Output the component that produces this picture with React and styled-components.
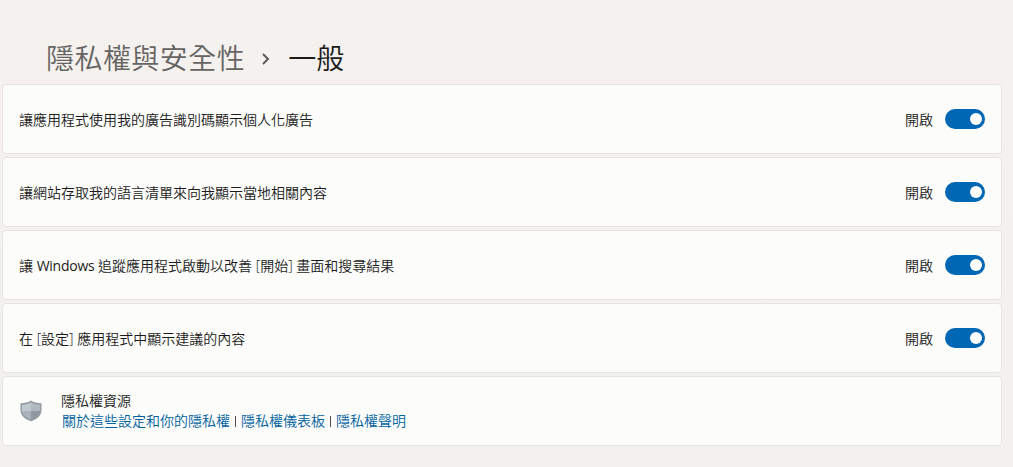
import React, { useState } from 'react';
import styled, { createGlobalStyle } from 'styled-components';

const GlobalStyle = createGlobalStyle`
  * {
    box-sizing: border-box;
  }

  body {
    margin: 0;
    background: #f4f1ee;
    color: #1b1b1b;
    font-family: "Open Sans", "Noto Sans CJK TC", sans-serif;
    font-size: 14px;
    font-weight: 350;
    line-height: 20px;
  }
`;

const Page = styled.main`
  min-height: 467px;
  padding: 38px 11px 21px 2px;
  background: linear-gradient(to bottom, #f5f1ee, #f2f1ee);
`;

const Breadcrumb = styled.h1`
  display: flex;
  align-items: center;
  height: 40px;
  margin: 0 0 6px;
  padding-left: 44px;
  font-size: 28px;
  font-weight: 350;
  line-height: 40px;
  white-space: nowrap;
`;

const Parent = styled.span`
  color: #666462;
  letter-spacing: 0.45px;
`;

const Current = styled.span`
  color: #1b1b1b;
`;

const Chevron = styled.svg`
  width: 10px;
  height: 12px;
  margin: 2px 17px 0 16px;
  fill: none;
  stroke: #5f5d5b;
  stroke-width: 2;
`;

const CardList = styled.div`
  display: grid;
  gap: 3px;
`;

const Card = styled.section`
  display: flex;
  align-items: center;
  height: 70px;
  padding: 0 16px;
  background: #fcfcfa;
  border: 1px solid #e7e4e1;
  border-radius: 4px;
`;

const Label = styled.span`
  flex: 1;
  padding-top: 2px;
  white-space: nowrap;
`;

// Latin words look too thin at the weight used for the Chinese text
const Latin = styled.span`
  font-weight: 400;
  letter-spacing: -0.25px;
`;

const Status = styled.span`
  margin-right: 12px;
  padding-top: 2px;
`;

const Toggle = styled.button`
  display: flex;
  align-items: center;
  justify-content: ${props => (props.$on ? 'flex-end' : 'flex-start')};
  width: 40px;
  height: 20px;
  padding: 0 3px;
  background: ${props => (props.$on ? '#0067b5' : '#8a8886')};
  border: 0;
  border-radius: 10px;
`;

const Knob = styled.span`
  width: 12px;
  height: 12px;
  background: #fff;
  border-radius: 50%;
`;

const ShieldIcon = styled.svg`
  width: 24px;
  height: 24px;
  margin-right: 18px;
`;

const Links = styled.div`
  display: flex;
  align-items: center;
  padding-left: 1px;
  white-space: nowrap;
`;

const ResourceLink = styled.a`
  color: #00619f;
  text-decoration: none;
`;

const Divider = styled.span`
  width: 1px;
  height: 11px;
  margin: 0 5px;
  background: #5c4a45;
`;

const settings = [
  { id: 'ads', label: '讓應用程式使用我的廣告識別碼顯示個人化廣告' },
  { id: 'language', label: '讓網站存取我的語言清單來向我顯示當地相關內容' },
  {
    id: 'tracking',
    label: (
      <>
        讓 <Latin>Windows</Latin> 追蹤應用程式啟動以改善 [開始] 畫面和搜尋結果
      </>
    ),
  },
  { id: 'suggestions', label: '在 [設定] 應用程式中顯示建議的內容' },
];

const links = ['關於這些設定和你的隱私權', '隱私權儀表板', '隱私權聲明'];

function Shield() {
  return (
    <ShieldIcon viewBox="0 0 24 24" aria-hidden="true">
      <path
        d="M12 1.6C9.4 3.4 5 4.4 1.5 4.3V11c0 6 5 9.6 10.5 11.2C17.5 20.6 22.5 17 22.5 11V4.3C19 4.4 14.6 3.4 12 1.6Z"
        fill="#929aa1"
      />
      <path d="M12 3.2C9.3 4.9 6.2 5.7 2.9 5.7V12H12Z" fill="#c0c8cf" />
      <path d="M12 3.2C14.7 4.9 17.8 5.7 21.1 5.7V12H12Z" fill="#b0b8c0" />
      <path d="M2.9 12H12v8.8C7 18.6 3.3 16 2.9 12Z" fill="#aab2bb" />
      <path d="M21.1 12H12v8.8C17 18.6 20.7 16 21.1 12Z" fill="#8f97a1" />
    </ShieldIcon>
  );
}

function SettingCard({ id, label }) {
  const [on, setOn] = useState(true);

  return (
    <Card>
      <Label id={id}>{label}</Label>
      <Status>{on ? '開啟' : '關閉'}</Status>
      <Toggle $on={on} role="switch" aria-checked={on} aria-labelledby={id} onClick={() => setOn(!on)}>
        <Knob />
      </Toggle>
    </Card>
  );
}

const App = () => (
  <>
    <GlobalStyle />
    <Page>
      <Breadcrumb>
        <Parent>隱私權與安全性</Parent>
        <Chevron viewBox="0 0 10 12" aria-hidden="true">
          <path d="M2 1l5 5-5 5" />
        </Chevron>
        <Current>一般</Current>
      </Breadcrumb>
      <CardList>
        {settings.map(({ id, label }) => (
          <SettingCard key={id} id={id} label={label} />
        ))}
        <Card>
          <Shield />
          <div>
            <div>隱私權資源</div>
            <Links>
              {links.map((link, i) => (
                <React.Fragment key={link}>
                  {i > 0 && <Divider />}
                  <ResourceLink href="#">{link}</ResourceLink>
                </React.Fragment>
              ))}
            </Links>
          </div>
        </Card>
      </CardList>
    </Page>
  </>
);

export default App;
